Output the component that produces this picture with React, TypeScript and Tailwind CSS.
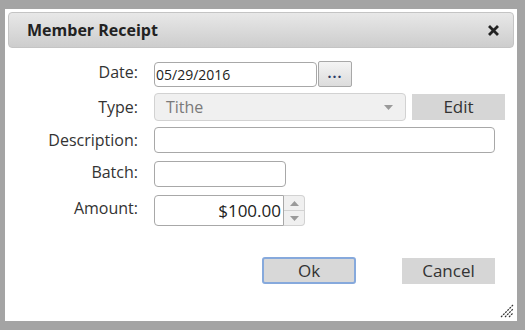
import React from 'react';

const font = { fontFamily: '"Open Sans", "DejaVu Sans", sans-serif' };

function Label({ children, up = false }: { children: React.ReactNode; up?: boolean }) {
    return (
        <div className={up ? 'w-[130px] shrink-0 pb-[5px] text-right text-[16px] text-[#333]' : 'w-[130px] shrink-0 text-right text-[16px] text-[#333]'}>
            {children}
        </div>
    );
}

export default function App() {
    return (
        <div className="h-[330px] w-[525px] bg-[#a4a4a4] pl-[5px] pt-[9px]" style={font}>
            {/* Dialog */}
            <div className="relative flex h-[312px] w-[512px] flex-col bg-white px-[3px] pt-[3px]">
                {/* Title bar */}
                <div className="flex h-[36px] items-center justify-between rounded-[4px] border border-[#c4c4c4] bg-gradient-to-b from-[#e8e8e8] to-[#cdcdcd] pl-[18px] pr-[14px]">
                    <span className="text-[16px] font-bold text-[#222]">Member Receipt</span>
                    <svg width="11" height="11" viewBox="0 0 11 11">
                        <path d="M2 2 L9 9 M9 2 L2 9" stroke="#222" strokeWidth="2.8" strokeLinecap="square" />
                    </svg>
                </div>

                {/* Form */}
                <div className="flex flex-col pt-[13px]">
                    {/* Date */}
                    <div className="flex h-[26px] items-center">
                        <Label up>Date:</Label>
                        <div className="ml-[16px] flex items-center gap-[1px]">
                            <div className="flex h-[25px] w-[163px] items-center rounded-[4px] border border-[#a8a8a8] pl-[1px] text-[14px] text-[#222]">
                                05/29/2016
                            </div>
                            <div className="flex h-[26px] w-[34px] items-center justify-center rounded-[2px] border border-[#a8a8a8] bg-gradient-to-b from-[#f4f4f4] to-[#dcdcdc] pb-[3px] text-[14px] font-bold tracking-[1px] text-[#2d3a66]">
                                ...
                            </div>
                        </div>
                    </div>

                    {/* Type */}
                    <div className="mt-[6px] flex h-[28px] items-center">
                        <Label>Type:</Label>
                        <div className="ml-[16px] flex h-[28px] w-[252px] items-center justify-between rounded-[4px] border border-[#d2d2d2] bg-[#f0f0f0] pl-[11px] pr-[12px] text-[16px] text-[#7a7a7a]">
                            <span>Tithe</span>
                            <svg width="9" height="5" viewBox="0 0 9 5">
                                <path d="M0 0 L9 0 L4.5 5 Z" fill="#9a9a9a" />
                            </svg>
                        </div>
                        <div className="ml-[6px] flex h-[26px] w-[93px] items-center justify-center bg-[#d6d6d6] text-[17px] text-[#333]">
                            Edit
                        </div>
                    </div>

                    {/* Description */}
                    <div className="mt-[6px] flex h-[26px] items-center">
                        <Label>Description:</Label>
                        <div className="ml-[16px] h-[26px] w-[341px] rounded-[4px] border border-[#a8a8a8]" />
                    </div>

                    {/* Batch */}
                    <div className="mt-[8px] flex h-[26px] items-center">
                        <Label up>Batch:</Label>
                        <div className="ml-[16px] h-[26px] w-[132px] rounded-[4px] border border-[#a8a8a8]" />
                    </div>

                    {/* Amount */}
                    <div className="mt-[8px] flex h-[31px] items-center">
                        <Label up>Amount:</Label>
                        <div className="ml-[16px] flex h-[31px] items-stretch">
                            <div className="flex w-[130px] items-center justify-end rounded-l-[4px] border border-[#a8a8a8] pr-[2px] text-[17px] text-[#222]">
                                $100.00
                            </div>
                            <div className="flex w-[21px] flex-col rounded-r-[4px] border border-l-0 border-[#d2d2d2] bg-[#f0f0f0]">
                                <div className="flex flex-1 items-center justify-center border-b border-[#d2d2d2]">
                                    <svg width="9" height="5" viewBox="0 0 9 5">
                                        <path d="M0 5 L9 5 L4.5 0 Z" fill="#9a9a9a" />
                                    </svg>
                                </div>
                                <div className="flex flex-1 items-center justify-center">
                                    <svg width="9" height="5" viewBox="0 0 9 5">
                                        <path d="M0 0 L9 0 L4.5 5 Z" fill="#9a9a9a" />
                                    </svg>
                                </div>
                            </div>
                        </div>
                    </div>

                    {/* Buttons */}
                    <div className="mt-[31px] flex items-center">
                        <div className="ml-[254px] flex h-[27px] w-[94px] items-center justify-center rounded-[3px] border-2 border-[#86a9dc] bg-[#d8d8d8] text-[17px] text-[#333]">
                            Ok
                        </div>
                        <div className="ml-[46px] flex h-[26px] w-[93px] items-center justify-center bg-[#d6d6d6] text-[17px] text-[#333]">
                            Cancel
                        </div>
                    </div>
                </div>

                {/* Resize grip */}
                <svg className="absolute bottom-[3px] right-[3px]" width="14" height="14" viewBox="0 0 14 14">
                    <path d="M1 13 L13 1 M5 13 L13 5 M9 13 L13 9" stroke="#333" strokeWidth="1.2" strokeDasharray="2 1" />
                </svg>
            </div>
        </div>
    );
}
